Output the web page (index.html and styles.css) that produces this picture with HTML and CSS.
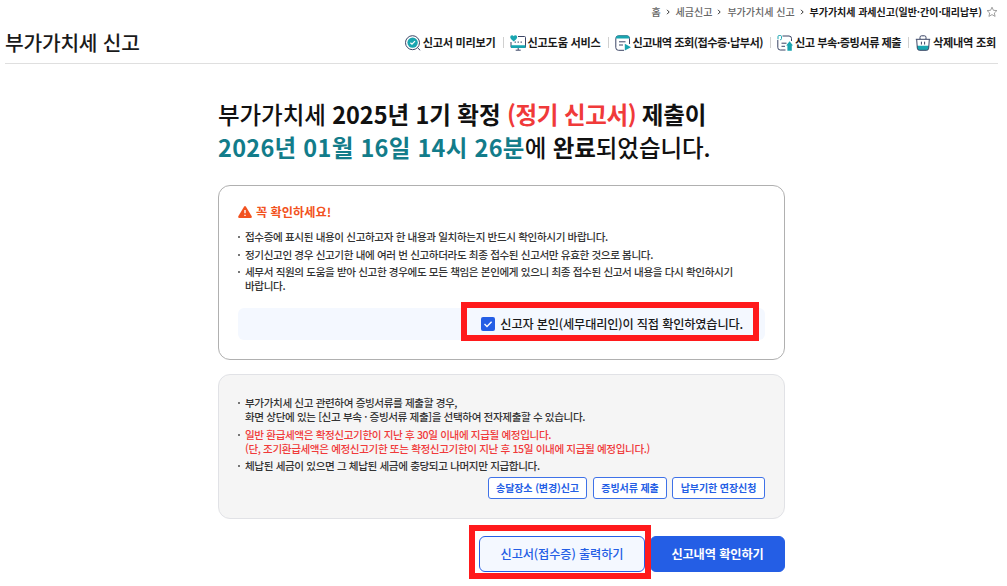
FILE: index.html
```
<!DOCTYPE html>
<html lang="ko">
<head>
  <meta charset="UTF-8">
  <title>부가가치세 신고</title>
  <link rel="stylesheet" href="styles.css">
</head>
<body>
  <header class="header">
    <nav class="breadcrumb">
      <span>홈</span>
      <svg class="arrow" viewBox="0 0 4 6"><path d="M1 .8 3.2 3 1 5.2"/></svg>
      <span>세금신고</span>
      <svg class="arrow" viewBox="0 0 4 6"><path d="M1 .8 3.2 3 1 5.2"/></svg>
      <span>부가가치세 신고</span>
      <svg class="arrow" viewBox="0 0 4 6"><path d="M1 .8 3.2 3 1 5.2"/></svg>
      <strong>부가가치세 과세신고(일반·간이·대리납부)</strong>
      <svg class="star" viewBox="0 0 12 12"><path d="M6 1.2 7.4 4.3 10.9 4.6 8.3 7 9.1 10.4 6 8.6 2.9 10.4 3.7 7 1.1 4.6 4.6 4.3Z"/></svg>
    </nav>
    <div class="title-row">
      <h1>부가가치세 신고</h1>
      <ul class="menu">
        <li>
          <svg class="icon" viewBox="0 0 16 16">
            <circle class="line" cx="7.5" cy="7.7" r="7"/>
            <path class="line" d="M12.6 12.8 15.2 15.3"/>
            <circle class="fill" cx="7.6" cy="7.6" r="5.2"/>
            <path class="check" d="M5.4 7.7 7 9.2 10 6.2"/>
          </svg>
          <span>신고서 미리보기</span>
        </li>
        <li>
          <svg class="icon" viewBox="0 0 16 16">
            <path class="line" d="M8 1.5H14.5Q15.5 1.5 15.5 2.5V12.3H1V7"/>
            <path class="fill" d="M1 10.2H15.5V12Q15.5 13 14.5 13H2Q1 13 1 12ZM.2 2.2Q.2.2 2 .2 3.1.2 3.7 1.2 4.3.2 5.4.2 7.2.2 7.2 2.2 7.2 4.2 3.7 6.4.2 4.2.2 2.2Z"/>
            <path class="line" d="M8.2 13V15M5.7 15.2H10.7"/>
            <path class="dots" d="M4.6 7.2H5.8M7.6 7.2H8.8M10.6 7.2H11.8"/>
          </svg>
          <span>신고도움 서비스</span>
        </li>
        <li class="dense">
          <svg class="icon" viewBox="0 0 16 16">
            <path class="line" d="M9 15.3H3.5Q.8 15.3.8 12.6V3.5Q.8.8 3.5.8H12Q14.5.8 14.5 3.5V9M4 6.8H10.5M4 10H8"/>
            <path class="fill" d="M.8 3.6Q.8.4 3.5.4H12Q14.5.4 14.5 3.6ZM9.8 8.8 16 12.2 9.8 15.6Z"/>
          </svg>
          <span>신고내역 조회(접수증·납부서)</span>
        </li>
        <li class="dense">
          <svg class="icon" viewBox="0 0 16 16">
            <path class="line" d="M5.5 1H12Q14.5 1 14.5 3.5V6M.8 5V12.5Q.8 15 3.3 15H8.5M4.5 8.2H9.5M4.5 11.3H8"/>
            <path class="clip" d="M1 4.3V1.6Q1 .5 2.2.5H3.3Q4.5.5 4.5 1.6V3.5Q4.5 4.8 3.2 4.8"/>
            <path class="fill" d="M12.6 6.3 16 10.4H14.8V15.7H10.4V10.4H9.2Z"/>
          </svg>
          <span>신고 부속·증빙서류 제출</span>
        </li>
        <li>
          <svg class="icon" viewBox="0 0 16 16">
            <path class="fill" d="M2 10.7H14L13.7 13.5Q13.4 15.3 11.8 15.3H4.2Q2.6 15.3 2.3 13.5Z"/>
            <path class="line" d="M.8 4.3H15.2M5 4V2.5Q5 .8 6.5.8H9.5Q11 .8 11 2.5V4M1.7 4.5 2.3 13.2Q2.5 15.3 4.5 15.3H11.5Q13.5 15.3 13.7 13.2L14.3 4.5M6.4 6.7V9.5M9.6 6.7V9.5"/>
          </svg>
          <span>삭제내역 조회</span>
        </li>
      </ul>
    </div>
  </header>

  <main class="content">
    <h2 class="result">
      <span class="result-line first">부가가치세 <b>2025년 1기 확정 <em>(정기 신고서)</em> 제출이</b></span>
      <span class="result-line second"><b class="date">2026년 01월 16일 14시 26분</b>에 <b>완료</b>되었습니다.</span>
    </h2>

    <section class="card notice">
      <h3>
        <svg class="warn" viewBox="0 0 14 12"><path d="M6 .7Q7 -.6 8 .7L13.7 10.3Q14.2 12 12.7 12H1.3Q-.2 12 .3 10.3Z"/><path class="mark" d="M7 4V7.3M7 8.7V10"/></svg>
        <span>꼭 확인하세요!</span>
      </h3>
      <ul class="list">
        <li>접수증에 표시된 내용이 신고하고자 한 내용과 일치하는지 반드시 확인하시기 바랍니다.</li>
        <li>정기신고인 경우 신고기한 내에 여러 번 신고하더라도 최종 접수된 신고서만 유효한 것으로 봅니다.</li>
        <li>세무서 직원의 도움을 받아 신고한 경우에도 모든 책임은 본인에게 있으니 최종 접수된 신고서 내용을 다시 확인하시기<br>바랍니다.</li>
      </ul>
      <div class="confirm">
        <label class="agree">
          <svg class="checkbox" viewBox="0 0 14 14"><rect width="14" height="14" rx="2"/><path d="M3.5 7 6 9.4 10.6 4.8"/></svg>
          <span>신고자 본인(세무대리인)이 직접 확인하였습니다.</span>
        </label>
      </div>
    </section>

    <section class="card guide">
      <ul class="list">
        <li>부가가치세 신고 관련하여 증빙서류를 제출할 경우,<br>화면 상단에 있는 [신고 부속 · 증빙서류 제출]을 선택하여 전자제출할 수 있습니다.</li>
        <li class="red">일반 환급세액은 확정신고기한이 지난 후 30일 이내에 지급될 예정입니다.<br>(단, 조기환급세액은 예정신고기한 또는 확정신고기한이 지난 후 15일 이내에 지급될 예정입니다.)</li>
        <li>체납된 세금이 있으면 그 체납된 세금에 충당되고 나머지만 지급합니다.</li>
      </ul>
      <div class="links">
        <button class="small w1">송달장소 (변경)신고</button>
        <button class="small w2">증빙서류 제출</button>
        <button class="small w3">납부기한 연장신청</button>
      </div>
    </section>

    <div class="actions">
      <div class="print">
        <button class="btn outline">신고서(접수증) 출력하기</button>
      </div>
      <button class="btn primary">신고내역 확인하기</button>
    </div>
  </main>
</body>
</html>
```
FILE: styles.css
```
* {
  box-sizing: border-box;
}
body {
  margin: 0;
  height: 586px;
  overflow: hidden;
  background: #fff;
  color: #1a1a1a;
  font-family: "Noto Sans CJK KR", sans-serif;
}
h1, h2, h3, ul {
  margin: 0;
  padding: 0;
  list-style: none;
}
button {
  padding: 0;
  font-family: inherit;
  white-space: nowrap;
}
span, strong {
  white-space: nowrap;
}

/* header */
.header {
  margin: 0 9px 0 5px;
  height: 64px;
  border-bottom: 1px solid #dfdfdf;
}
.breadcrumb {
  display: flex;
  justify-content: flex-end;
  align-items: center;
  height: 23px;
  font-size: 10px;
  font-weight: 500;
  color: #666;
}
.breadcrumb strong {
  font-weight: 700;
  letter-spacing: -.04px;
  color: #1a1a1a;
}
.arrow {
  width: 4px;
  height: 6px;
  margin: 0 6px 0 5px;
  fill: none;
  stroke: #333;
}
.star {
  width: 12px;
  height: 12px;
  margin-left: 4px;
  fill: none;
  stroke: #888;
  stroke-width: .8;
}
.title-row {
  display: flex;
  justify-content: space-between;
  align-items: center;
  height: 39px;
}
h1 {
  padding-bottom: 2px;
  font-size: 20.3px;
  font-weight: 500;
  line-height: 30px;
  letter-spacing: -.2px;
}
.menu {
  display: flex;
  align-items: center;
  margin-right: 2px;
}
.menu li {
  display: flex;
  align-items: center;
  font-size: 11.2px;
  font-weight: 700;
  line-height: 16px;
  letter-spacing: -.28px;
}
.menu .dense {
  letter-spacing: -.52px;
}
.menu span {
  padding-bottom: 2px;
}
.menu li + li::before {
  content: "";
  width: 1px;
  height: 11px;
  margin: 0 6px 0 7px;
  background: #d0d0d0;
}
.icon {
  width: 16px;
  height: 16px;
  margin-right: 2px;
}
.line {
  fill: none;
  stroke: #3b4565;
}
.fill {
  fill: #19a5b0;
}
.clip {
  fill: none;
  stroke: #19a5b0;
}
.check {
  fill: none;
  stroke: #fff;
  stroke-width: 1.2;
}
.dots {
  fill: none;
  stroke: #3b4565;
  stroke-width: 1.2;
}

/* content */
.content {
  width: 567px;
  margin: 34px 0 0 218px;
}
.result {
  font-size: 23.5px;
  font-weight: 500;
  line-height: 33px;
  color: #111;
}
.result-line {
  display: block;
}
.first {
  letter-spacing: -.07px;
}
.second {
  letter-spacing: -.08px;
}
.result em {
  margin-right: -1px;
  font-style: normal;
  letter-spacing: -.4px;
  color: #f03a3a;
}
.result .date {
  letter-spacing: .28px;
  color: #127c8a;
}
.card {
  border-radius: 12px;
  padding: 0 19px;
}
.notice {
  height: 175px;
  margin-top: 21px;
  padding-top: 17px;
  border: 1px solid #b0b0b0;
}
h3 {
  display: flex;
  align-items: center;
  gap: 4px;
  height: 18px;
  font-size: 12.2px;
  font-weight: 700;
  color: #f25220;
}
.warn {
  width: 14px;
  height: 12px;
  fill: #f25220;
}
.warn .mark {
  stroke: #fff;
  stroke-width: 1.4;
}
.list {
  font-size: 10.6px;
  font-weight: 500;
  line-height: 14px;
  letter-spacing: -.39px;
  white-space: nowrap;
  color: #333;
}
.notice .list {
  padding-top: 9px;
}
.list li {
  position: relative;
  padding-left: 7px;
  margin-bottom: 3.5px;
}
.list li::before {
  content: "";
  position: absolute;
  left: 0;
  top: 6px;
  width: 2px;
  height: 2px;
  background: #777;
}
.list .red {
  color: #f03a3a;
}
.confirm {
  display: flex;
  justify-content: flex-end;
  height: 32px;
  margin-top: 15px;
  border-radius: 6px;
  background: #f4f8ff;
}
.agree {
  position: relative;
  display: flex;
  align-items: center;
  gap: 5px;
  margin-right: 22px;
  font-size: 12.2px;
  font-weight: 500;
  letter-spacing: -.16px;
}
.checkbox {
  width: 14px;
  height: 14px;
  fill: #245ee5;
}
.checkbox path {
  fill: none;
  stroke: #fff;
  stroke-width: 1.4;
}

/* red emphasis frames */
.agree::after,
.print::after {
  content: "";
  position: absolute;
  border: 6px solid #ff1a1c;
}
.agree::after {
  top: -6px;
  bottom: -1px;
  left: -20px;
  right: -16px;
}
.print::after {
  top: -11px;
  bottom: -7px;
  left: -10px;
  right: -6px;
}

.guide {
  height: 145px;
  margin-top: 14px;
  padding-top: 21px;
  border: 1px solid #e1e2e6;
  background: #f5f5f5;
}
.links {
  display: flex;
  justify-content: flex-end;
  gap: 5px;
}
.small {
  height: 22px;
  border: 1px solid #3f72e8;
  border-radius: 3px;
  background: #fff;
  color: #245ee5;
  font-size: 10px;
  font-weight: 700;
  letter-spacing: -.1px;
}
.w1 {
  width: 99px;
  margin-right: 1px;
}
.w2 {
  width: 74px;
}
.w3 {
  width: 93px;
}
.actions {
  display: flex;
  justify-content: flex-end;
  gap: 5px;
  margin-top: 17px;
}
.print {
  position: relative;
}
.btn {
  display: block;
  height: 36px;
  border: 1px solid #245ee5;
  border-radius: 6px;
  font-size: 12.2px;
  font-weight: 700;
  letter-spacing: -.1px;
}
.outline {
  width: 166px;
  background: #f4f8ff;
  color: #245ee5;
  font-weight: 500;
}
.primary {
  width: 135px;
  background: #245ee5;
  color: #fff;
}
```
